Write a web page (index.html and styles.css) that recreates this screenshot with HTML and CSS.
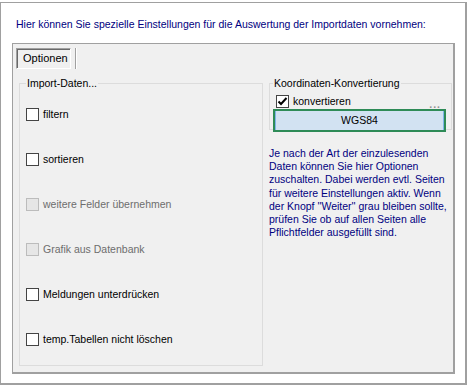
FILE: index.html
```html
<!DOCTYPE html>
<html lang="de">

<head>
    <meta charset="UTF-8">
    <title>Import - Optionen</title>
    <link rel="stylesheet" href="styles.css">
</head>

<body>
    <div class="frame">
        <p class="intro">Hier können Sie spezielle Einstellungen für die Auswertung der Importdaten vornehmen:</p>

        <div class="tab-panel">
            <div class="tab-strip">
                <div class="tab active">Optionen</div>
                <div class="tab-sep"></div>
            </div>

            <div class="tab-content">
                <fieldset class="group import-group">
                    <legend>Import-Daten...</legend>
                    <label class="check"><span class="box"></span>filtern</label>
                    <label class="check"><span class="box"></span>sortieren</label>
                    <label class="check disabled"><span class="box"></span>weitere Felder übernehmen</label>
                    <label class="check disabled"><span class="box"></span>Grafik aus Datenbank</label>
                    <label class="check"><span class="box"></span>Meldungen unterdrücken</label>
                    <label class="check"><span class="box"></span>temp.Tabellen nicht löschen</label>
                </fieldset>

                <div class="right-col">
                    <fieldset class="group coord-group">
                        <legend>Koordinaten-Konvertierung</legend>
                        <div class="coord-row">
                            <label class="check checked"><span class="box">
                                <svg width="11" height="11" viewBox="0 0 11 11"><path d="M1.5 5.5 L4 8 L9.5 2" fill="none" stroke="#000" stroke-width="2"/></svg>
                            </span>konvertieren</label>
                            <span class="dots">...</span>
                        </div>
                        <div class="wgs-field">WGS84</div>
                    </fieldset>

                    <p class="hint">Je nach der Art der einzulesenden<br>
                        Daten können Sie hier Optionen<br>
                        zuschalten. Dabei werden evtl. Seiten<br>
                        für weitere Einstellungen aktiv. Wenn<br>
                        der Knopf ''Weiter'' grau bleiben sollte,<br>
                        prüfen Sie ob auf allen Seiten alle<br>
                        Pflichtfelder ausgefüllt sind.</p>
                </div>
            </div>
        </div>
    </div>
</body>

</html>
```

FILE: styles.css
```css
* {
    margin: 0;
    padding: 0;
    box-sizing: border-box;
}

body {
    font-family: 'Liberation Sans', Arial, sans-serif;
    font-size: 10.5px;
    line-height: 13px;
    background: #ffffff;
    color: #000000;
    padding-top: 2px;
}

.frame {
    width: 467px;
    height: 383px;
    border: 1px solid #a0a0a0;
    border-right-width: 2px;
    border-bottom-width: 2px;
    padding: 15px 10px 0 11px;
}

.intro {
    color: #000080;
    padding-left: 4px;
    white-space: nowrap;
}

.tab-panel {
    margin-top: 12px;
    height: 331px;
    background: #f0f0f0;
    border: 1px solid #a0a0a0;
    border-right-width: 2px;
    border-bottom-width: 2px;
}

.tab-strip {
    display: flex;
    align-items: stretch;
    padding: 4px 0 0 3px;
    height: 26px;
}

.tab {
    width: 55px;
    height: 21px;
    padding-left: 6px;
    font-size: 11px;
    line-height: 19px;
    border: 1px solid #a0a0a0;
    border-right-color: #ffffff;
    border-bottom-color: #ffffff;
    box-shadow: inset 1px 1px 0 #696969;
}

.tab-sep {
    width: 2px;
    height: 21px;
    margin-left: 4px;
    border-left: 1px solid #a0a0a0;
    border-right: 1px solid #ffffff;
}

.tab-content {
    display: grid;
    grid-template-columns: 244px 184px;
    gap: 5px;
    padding: 7px 0 0 6px;
}

.group {
    border: 1px solid #dcdcdc;
    margin: 0;
    padding: 0 0 0 6px;
}

.group legend {
    padding: 0 1px;
}

.import-group {
    height: 289px;
    padding-top: 18px;
    display: flex;
    flex-direction: column;
    gap: 32px;
}

.check {
    display: flex;
    align-items: center;
    gap: 4px;
    height: 13px;
    white-space: nowrap;
}

.box {
    width: 13px;
    height: 13px;
    border: 1px solid #444444;
    background: #ffffff;
    display: flex;
    align-items: center;
    justify-content: center;
}

.check.disabled {
    color: #6d6d6d;
}

.check.disabled .box {
    border-color: #bcbcbc;
    background: #e6e6e6;
}

.right-col {
    padding-left: 1px;
}

.coord-group {
    width: 183px;
    height: 53px;
    padding-top: 4px;
    padding-left: 3px;
}

.coord-row {
    display: flex;
    align-items: center;
    justify-content: space-between;
    padding: 0 10px 0 3px;
}

.dots {
    color: #909090;
    font-weight: bold;
    letter-spacing: 1px;
    line-height: 8px;
    margin-top: 6px;
}

.wgs-field {
    margin-top: 1px;
    width: 173px;
    height: 23px;
    border: 2px solid #2e8b57;
    background: #d2e2f2;
    box-shadow: inset 1px 0 0 #7fb4e8, inset -1px 0 0 #7fb4e8;
    text-align: center;
    line-height: 19px;
}

.hint {
    color: #000080;
    margin-top: 17px;
    line-height: 13.2px;
    white-space: nowrap;
}
```
